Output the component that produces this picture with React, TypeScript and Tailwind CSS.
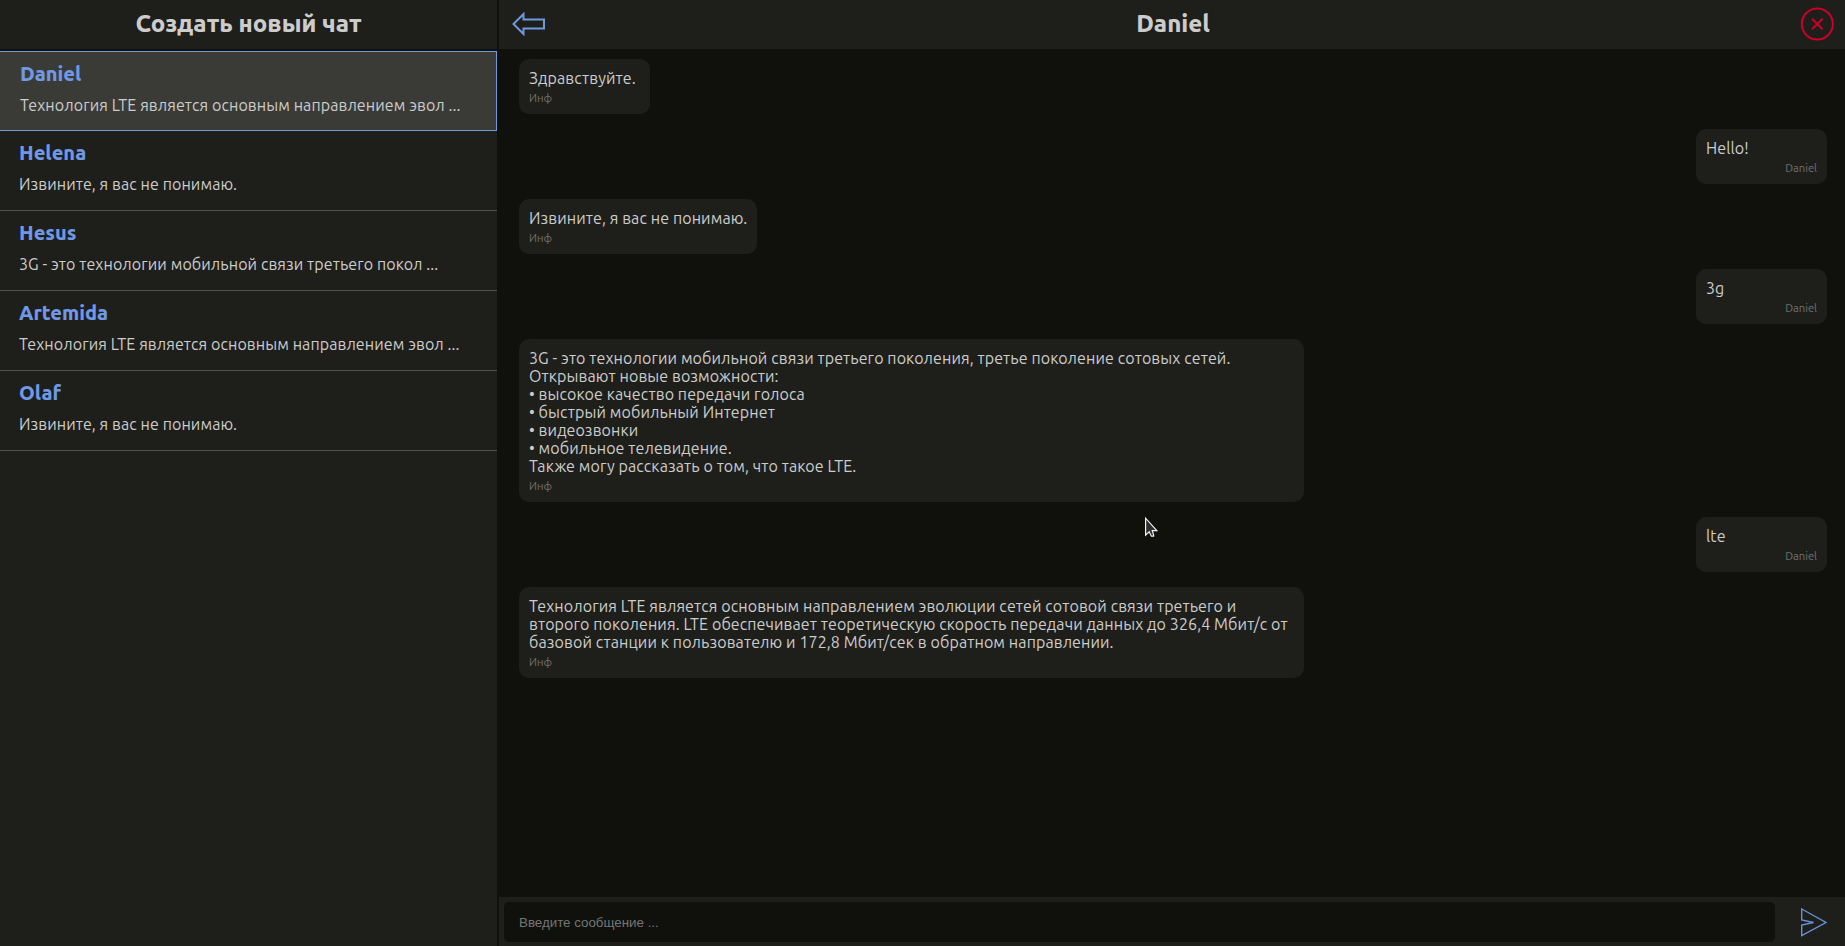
type Chat = { name: string; preview: string };
type Message = { author: string; own?: boolean; lines: string[] };

const chats: Chat[] = [
  { name: 'Daniel', preview: 'Технология LTE является основным направлением эвол ...' },
  { name: 'Helena', preview: 'Извините, я вас не понимаю.' },
  { name: 'Hesus', preview: '3G - это технологии мобильной связи третьего покол ...' },
  { name: 'Artemida', preview: 'Технология LTE является основным направлением эвол ...' },
  { name: 'Olaf', preview: 'Извините, я вас не понимаю.' },
];

const messages: Message[] = [
  { author: 'Инф', lines: ['Здравствуйте.'] },
  { author: 'Daniel', own: true, lines: ['Hello!'] },
  { author: 'Инф', lines: ['Извините, я вас не понимаю.'] },
  { author: 'Daniel', own: true, lines: ['3g'] },
  {
    author: 'Инф',
    lines: [
      '3G - это технологии мобильной связи третьего поколения, третье поколение сотовых сетей.',
      'Открывают новые возможности:',
      '• высокое качество передачи голоса',
      '• быстрый мобильный Интернет',
      '• видеозвонки',
      '• мобильное телевидение.',
      'Также могу рассказать о том, что такое LTE.',
    ],
  },
  { author: 'Daniel', own: true, lines: ['lte'] },
  {
    author: 'Инф',
    lines: [
      'Технология LTE является основным направлением эволюции сетей сотовой связи третьего и',
      'второго поколения. LTE обеспечивает теоретическую скорость передачи данных до 326,4 Мбит/с от',
      'базовой станции к пользователю и 172,8 Мбит/сек в обратном направлении.',
    ],
  },
];

function ChatItem({ chat, active }: { chat: Chat; active: boolean }) {
  return (
    <li
      className={
        active
          ? 'h-20 border border-l-0 border-[#7299dc] bg-[#3a3b36] pt-[10px] pl-5'
          : 'h-20 border-b border-[#50524c] pt-[10px] pl-[19px]'
      }
    >
      <div className="text-xl leading-6 font-extrabold text-[#6f99e6]">{chat.name}</div>
      <div className="mt-[10px] text-base leading-[18px] tracking-[0.09px] whitespace-nowrap">{chat.preview}</div>
    </li>
  );
}

function Bubble({ message }: { message: Message }) {
  const wide = message.lines.length > 1;
  return (
    <div
      className={`min-w-[131px] rounded-[10px] bg-[#1e1f1b] px-[10px] pt-[10px] pb-[9px] ${message.own ? 'self-end' : 'self-start'} ${wide ? 'w-[785px]' : ''}`}
    >
      {message.lines.map((line) => (
        <p key={line} className="text-base leading-[18px] tracking-[0.1px] whitespace-nowrap">
          {line}
        </p>
      ))}
      <p className={`mt-[5px] text-[11.2px] leading-[13px] text-[#71726f] ${message.own ? 'text-right' : ''}`}>{message.author}</p>
    </div>
  );
}

export default function App() {
  return (
    <div className="relative flex h-[946px] w-[1845px] gap-[2px] overflow-hidden bg-[#10110d] font-['Ubuntu','Noto_Sans',sans-serif] text-[#cccccc]">
      <aside className="flex w-[497px] shrink-0 flex-col gap-[2px]">
        <header className="flex h-[49px] shrink-0 items-center justify-center bg-[#1e1f1b] pb-px">
          <h1 className="text-2xl leading-7 font-extrabold">Создать новый чат</h1>
        </header>
        <ul className="flex-1 bg-[#1e1f1b]">
          {chats.map((chat, i) => (
            <ChatItem key={chat.name} chat={chat} active={i === 0} />
          ))}
        </ul>
      </aside>

      <main className="flex min-w-0 flex-1 flex-col">
        <header className="flex h-[49px] shrink-0 items-center justify-between bg-[#1e1f1b] pr-[11px] pb-px pl-[13px]">
          <button className="block" aria-label="Назад">
            <svg width="34" height="24" viewBox="0 0 34 24" fill="none" stroke="#7099dd" strokeWidth="2">
              <path d="M1.5 12 11.5 2V7.5H32V16.5H11.5V22Z" />
            </svg>
          </button>
          <h2 className="text-2xl leading-7 font-extrabold">Daniel</h2>
          <button className="block" aria-label="Закрыть">
            <svg width="34" height="34" viewBox="0 0 34 34" fill="none" stroke="#c9002b" strokeWidth="2">
              <circle cx="17.3" cy="17" r="15.5" />
              <path d="m12 11.7 10.6 10.6M22.6 11.7 12 22.3" />
            </svg>
          </button>
        </header>

        <section className="flex flex-1 flex-col gap-[15px] pt-[10px] pr-[18px] pl-5">
          {messages.map((message, i) => (
            <Bubble key={i} message={message} />
          ))}
        </section>

        <footer className="flex h-[49px] shrink-0 items-center bg-[#1e1f1b] pr-[18px] pl-[5px]">
          <input
            className="h-10 w-[1271px] rounded-[5px] bg-[#10110d] px-[15px] pt-px font-['Liberation_Sans',sans-serif] text-[13.33px] outline-none placeholder:text-[#757575]"
            placeholder="Введите сообщение ..."
          />
          <button className="ml-auto block" aria-label="Отправить">
            <svg width="27" height="30" viewBox="0 0 27 30" fill="none" stroke="#6792d8" strokeWidth="1.4">
              <path d="M1.7 2 26 15.5 1.7 28.5V18L13.5 15.5 1.7 13Z" />
            </svg>
          </button>
        </footer>
      </main>

      <svg className="absolute top-[516px] left-[1144px]" width="16" height="22" viewBox="0 0 16 22" fill="#2e2e2e" stroke="#f2f2f2" strokeWidth="1.2">
        <path d="M1.6 2.2V19.2L5.2 15.8 7.4 20.2H9.6V18.8L8.2 14.6H12.8Z" />
      </svg>
    </div>
  );
}
